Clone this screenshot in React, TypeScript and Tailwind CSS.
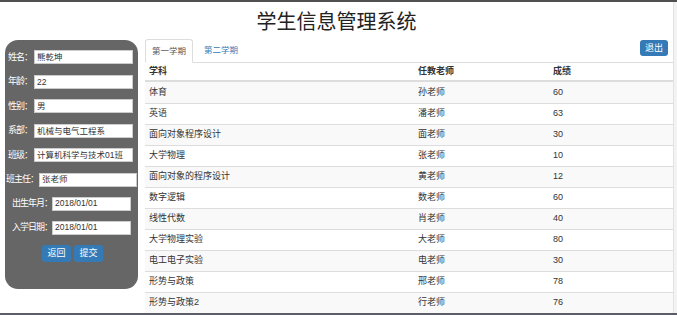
const student = [
  { label: "姓名：", value: "熊乾坤" },
  { label: "年龄：", value: "22" },
  { label: "性别：", value: "男" },
  { label: "系部：", value: "机械与电气工程系" },
  { label: "班级：", value: "计算机科学与技术01班" },
];

const grades = [
  { course: "体育", teacher: "孙老师", score: 60 },
  { course: "英语", teacher: "潘老师", score: 63 },
  { course: "面向对象程序设计", teacher: "面老师", score: 30 },
  { course: "大学物理", teacher: "张老师", score: 10 },
  { course: "面向对象的程序设计", teacher: "黄老师", score: 12 },
  { course: "数字逻辑", teacher: "数老师", score: 60 },
  { course: "线性代数", teacher: "肖老师", score: 40 },
  { course: "大学物理实验", teacher: "大老师", score: 80 },
  { course: "电工电子实验", teacher: "电老师", score: 30 },
  { course: "形势与政策", teacher: "邢老师", score: 78 },
  { course: "形势与政策2", teacher: "行老师", score: 76 },
];

function Field({ value, width }: { value: string; width: string }) {
  return (
    <div
      className={`flex h-[14px] items-center overflow-hidden whitespace-nowrap border border-[#ccc] bg-white pl-[2px] text-[8.5px] leading-none text-[#333] ${width}`}
    >
      {value}
    </div>
  );
}

export default function App() {
  return (
    <div className="flex h-[315px] w-[677px] flex-col overflow-hidden bg-white font-['Liberation_Sans','Noto_Sans_CJK_SC',sans-serif] text-[#333]">
      <div className="h-[2px] shrink-0 bg-[#505050]" />

      <div className="flex min-h-0 flex-1">
        <div className="flex w-[673px] flex-col">
          {/* Title */}
          <h1 className="flex h-[37px] shrink-0 items-center justify-center pt-[3px] text-[20px] leading-none text-[#222]">
            学生信息管理系统
          </h1>

          <div className="flex min-h-0 flex-1">
            {/* Student card */}
            <aside className="ml-[5px] mt-[1px] h-[249px] w-[133px] shrink-0 rounded-[13px] bg-[#666] pt-[5px] text-[9px] text-white">
              {student.map((s) => (
                <div key={s.label} className="flex h-[24.5px] items-center pl-[3px]">
                  <span className="w-[26px] shrink-0 whitespace-nowrap tracking-[-1px]">{s.label}</span>
                  <Field value={s.value} width="w-[99px]" />
                </div>
              ))}
              <div className="flex h-[24px] items-center pl-[1px]">
                <span className="w-[33px] shrink-0 whitespace-nowrap tracking-[-1px]">班主任：</span>
                <Field value="张老师" width="w-[98px]" />
              </div>
              <div className="flex h-[24px] items-center pl-[7px]">
                <span className="w-[40px] shrink-0 whitespace-nowrap tracking-[-1px]">出生年月：</span>
                <Field value="2018/01/01" width="w-[79px]" />
              </div>
              <div className="flex h-[24px] items-center pl-[7px]">
                <span className="w-[40px] shrink-0 whitespace-nowrap tracking-[-1px]">入学日期：</span>
                <Field value="2018/01/01" width="w-[79px]" />
              </div>
              <div className="mt-[5px] flex gap-[3px] pl-[37px]">
                <button className="h-[17px] w-[29px] rounded-[3px] bg-[#337ab7] text-[9px] leading-none text-white">
                  返回
                </button>
                <button className="h-[17px] w-[29px] rounded-[3px] bg-[#337ab7] text-[9px] leading-none text-white">
                  提交
                </button>
              </div>
            </aside>

            {/* Grades */}
            <main className="ml-[7px] flex min-w-0 flex-1 flex-col">
              <div className="flex h-[24px] shrink-0 border-b border-[#ddd]">
                <div className="-mb-px flex h-[24px] items-center rounded-t-[3px] border border-[#ddd] border-b-white bg-white px-[6px] text-[8.5px] text-[#555]">
                  第一学期
                </div>
                <div className="ml-[5px] flex h-[23px] items-center border border-transparent px-[5px] text-[8.5px] text-[#337ab7]">
                  第二学期
                </div>
                <button className="mr-[5px] ml-auto mt-[1px] h-[16px] w-[28px] self-start rounded-[3px] bg-[#337ab7] text-[9px] leading-none text-white">
                  退出
                </button>
              </div>

              <div className="grid h-[19px] shrink-0 grid-cols-[269px_135px_1fr] items-center border-b-2 border-[#ddd] text-[9px] font-bold text-[#333]">
                <div className="pl-[4px]">学科</div>
                <div className="pl-[4px]">任教老师</div>
                <div className="pl-[4px]">成绩</div>
              </div>

              {grades.map((g, i) => (
                <div
                  key={g.course}
                  className={`grid h-[21px] shrink-0 grid-cols-[269px_135px_1fr] items-center text-[9px] ${
                    i > 0 ? "border-t border-[#ddd]" : ""
                  } ${i % 2 === 0 ? "bg-[#f9f9f9]" : "bg-white"}`}
                >
                  <div className="pl-[4px]">{g.course}</div>
                  <div className="pl-[4px]">{g.teacher}</div>
                  <div className="pl-[4px]">{g.score}</div>
                </div>
              ))}
            </main>
          </div>
        </div>

        {/* page scrollbar edge */}
        <div className="w-[4px] border-l border-[#e2e2e2] bg-[#f3f3f3]" />
      </div>

      <div className="h-[2px] shrink-0 bg-[#5a5e69]" />
    </div>
  );
}
